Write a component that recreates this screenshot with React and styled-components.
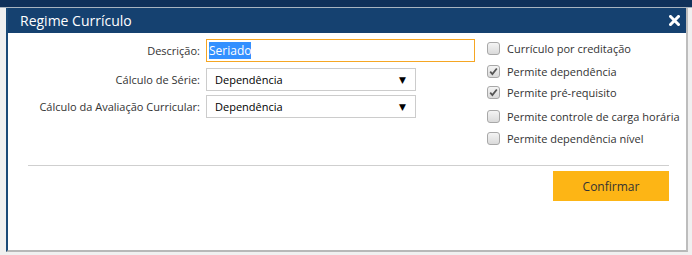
import React from 'react';
import styled, { createGlobalStyle } from 'styled-components';

const GlobalStyle = createGlobalStyle`
  html, body {
    margin: 0;
    padding: 0;
    background: #f0f0f0;
    font-family: "Open Sans", "Liberation Sans", sans-serif;
    overflow: hidden;
  }
`;

const Page = styled.div`
  width: 692px;
  height: 255px;
  display: flex;
  flex-direction: column;
  overflow: hidden;
`;

const TopBand = styled.div`
  height: 7px;
  background: #10315a;
  border-bottom: 1px solid #a9b4c0;
  flex-shrink: 0;
`;

const Stage = styled.div`
  display: flex;
  padding-left: 6px;
`;

const Modal = styled.div`
  width: 678px;
  height: 242px;
  background: #fff;
  border-left: 2px solid #1b4a78;
  border-right: 2px solid #bdbdbd;
  border-bottom: 2px solid #b8b8b8;
  display: flex;
  flex-direction: column;
`;

const TitleBar = styled.div`
  height: 25px;
  background: #154170;
  display: flex;
  align-items: center;
  justify-content: space-between;
  padding: 0 6px 0 12px;
  color: #fff;
  font-size: 14px;
  flex-shrink: 0;
`;

const Body = styled.div`
  display: flex;
  padding: 6px 0 0 0;
  height: 126px;
`;

const Form = styled.div`
  width: 470px;
  display: flex;
  flex-direction: column;
`;

const Row = styled.div`
  display: flex;
  align-items: center;
  margin-top: ${p => p.$gap || 0}px;
`;

const Label = styled.label`
  width: 192px;
  text-align: right;
  padding-right: 6px;
  font-size: 11px;
  color: #333;
  white-space: nowrap;
`;

const Input = styled.div`
  width: 265px;
  height: 21px;
  border: 1px solid #f5a623;
  display: flex;
  align-items: center;
  padding-left: 2px;
  font-size: 12px;
`;

const Selected = styled.span`
  background: #3390ff;
  color: #fff;
  line-height: 17px;
`;

const Select = styled.div`
  width: 210px;
  height: 23px;
  border: 1px solid #ccc;
  display: flex;
  align-items: center;
  justify-content: space-between;
  padding: 0 9px 0 8px;
  box-sizing: border-box;
  font-size: 11px;
  color: #000;
`;

const Arrow = styled.span`
  font-size: 9px;
  font-family: "DejaVu Sans", sans-serif;
`;

const Checks = styled.div`
  padding-left: 9px;
  display: flex;
  flex-direction: column;
`;

const CheckRow = styled.div`
  display: flex;
  align-items: center;
  height: 18px;
  margin-top: ${p => p.$gap || 0}px;
  font-size: 11px;
  color: #333;
`;

const Box = styled.span`
  width: 11px;
  height: 11px;
  border: 1px solid #a8a8a8;
  border-radius: 3px;
  background: linear-gradient(#f4f4f4, #dadada);
  margin-right: 7px;
  display: flex;
  align-items: center;
  justify-content: center;
`;

const Footer = styled.div`
  margin: 0 17px 0 20px;
  border-top: 1px solid #cfcfcf;
  display: flex;
  justify-content: flex-end;
  padding-top: 5px;
`;

const Button = styled.button`
  width: 116px;
  height: 30px;
  border: none;
  background: #fdb515;
  color: #333;
  font-family: "Open Sans", "Liberation Sans", sans-serif;
  font-size: 12px;
`;

const Under = styled.div`
  flex: 1;
  background: #fff;
`;

function Check({ checked }) {
  return (
    <Box>
      {checked && (
        <svg width="9" height="9" viewBox="0 0 9 9">
          <path d="M1.2 4.6 L3.4 7 L7.8 1.5" stroke="#555" strokeWidth="1.8" fill="none" />
        </svg>
      )}
    </Box>
  );
}

function CloseIcon() {
  return (
    <svg width="11" height="11" viewBox="0 0 11 11">
      <path d="M1.5 1.5 L9.5 9.5 M9.5 1.5 L1.5 9.5" stroke="#fff" strokeWidth="3" strokeLinecap="square" />
    </svg>
  );
}

const options = [
  { text: 'Currículo por creditação', checked: false, gap: 0 },
  { text: 'Permite dependência', checked: true, gap: 5 },
  { text: 'Permite pré-requisito', checked: true, gap: 3 },
  { text: 'Permite controle de carga horária', checked: false, gap: 6 },
  { text: 'Permite dependência nível', checked: false, gap: 4 },
];

export default function App() {
  return (
    <Page>
      <GlobalStyle />
      <TopBand />
      <Stage>
        <Modal>
          <TitleBar>
            <span>Regime Currículo</span>
            <CloseIcon />
          </TitleBar>
          <Body>
            <Form>
              <Row>
                <Label>Descrição:</Label>
                <Input><Selected>Seriado</Selected></Input>
              </Row>
              <Row $gap={6}>
                <Label>Cálculo de Série:</Label>
                <Select>Dependência<Arrow>▼</Arrow></Select>
              </Row>
              <Row $gap={4}>
                <Label>Cálculo da Avaliação Curricular:</Label>
                <Select>Dependência<Arrow>▼</Arrow></Select>
              </Row>
            </Form>
            <Checks>
              {options.map(o => (
                <CheckRow key={o.text} $gap={o.gap}>
                  <Check checked={o.checked} />
                  {o.text}
                </CheckRow>
              ))}
            </Checks>
          </Body>
          <Footer>
            <Button>Confirmar</Button>
          </Footer>
          <Under />
        </Modal>
      </Stage>
    </Page>
  );
}
